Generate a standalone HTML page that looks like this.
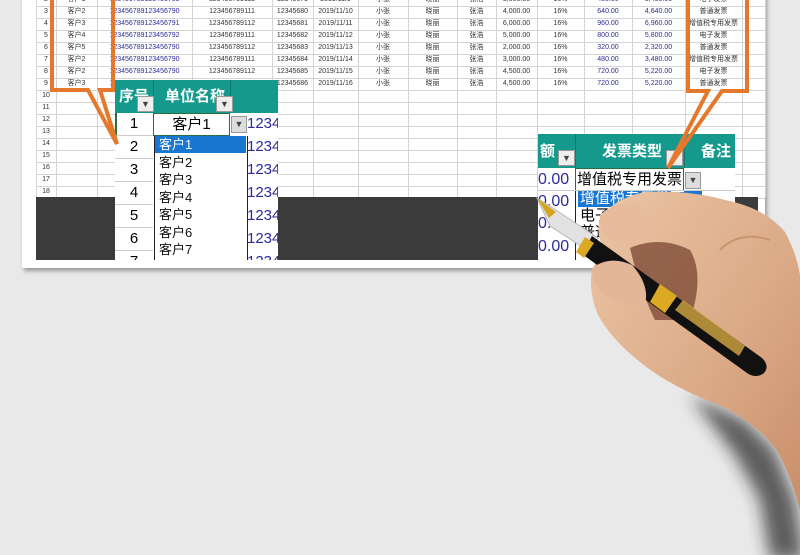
<!DOCTYPE html>
<html><head><meta charset="utf-8"><style>
body{margin:0;width:800px;height:555px;overflow:hidden;background:#e9e9e9;font-family:"Liberation Sans","Noto Sans CJK SC",sans-serif;position:relative}
.a{position:absolute}
.sheet{left:22px;top:-10px;width:743px;height:278px;background:#fff;box-shadow:2px 3px 4px rgba(0,0,0,.35)}
.t{position:absolute;font-size:7px;color:#333;white-space:nowrap;line-height:12px;text-align:center}
.b{color:#2b2b9a}
.hl{position:absolute;height:1px;background:#d4d4d4}
.vl{position:absolute;width:1px;background:#d4d4d4}
.clip{position:absolute;overflow:hidden}
</style></head><body>
<div class="a sheet"></div>
<div id="g"></div>
<div class="a" style="left:36px;top:197px;width:722px;height:63px;background:#3b3b3b"></div>

<!-- left zoomed table -->
<div class="clip" style="left:115px;top:80px;width:163px;height:180px;background:#fff">
<div class="a" style="left:0;top:0;width:163px;height:33px;background:#14998c"></div>
<div class="a" style="left:38px;top:0;width:1px;height:33px;background:#0e7a70"></div>
<div class="a" style="left:115px;top:0;width:1px;height:33px;background:#0e7a70"></div>
<div class="a" style="left:4px;top:5px;color:#fff;font-size:15px;font-weight:bold">序号</div>
<div class="a" style="left:50px;top:5px;color:#fff;font-size:15px;font-weight:bold">单位名称</div>
<div class="a" style="left:22px;top:16px;width:15px;height:14px;background:#eee;border:1px solid #999;font-size:9px;text-align:center;line-height:14px;color:#444">▼</div>
<div class="a" style="left:101px;top:16px;width:15px;height:14px;background:#eee;border:1px solid #999;font-size:9px;text-align:center;line-height:14px;color:#444">▼</div>
<div class="a" style="left:0;top:33px;width:38px;height:22px;border-left:2px solid #2c6e3c"></div>
<div class="a" style="left:38px;top:33px;width:75px;height:21px;border:1px solid #2c6e3c;font-size:15px;text-align:center;line-height:21px">客户1</div>
<div class="a" style="left:116px;top:36px;width:14px;height:15px;background:#ddd;border:1px solid #999;font-size:9px;text-align:center;line-height:15px;color:#444">▼</div>
<div id="lt"></div>
<div class="a" style="left:39px;top:56px;width:92px;height:130px;background:#fff;border-left:1px solid #222;border-right:1px solid #222"></div>
<div class="a" style="left:40px;top:56px;width:91px;height:17px;background:#1877d2"></div>
<div id="dl"></div>
</div>

<!-- right zoomed table -->
<div class="a" style="left:538px;top:134px;width:197px;height:126px;background:#fff"></div>
<div class="a" style="left:538px;top:134px;width:197px;height:34px;background:#14998c"></div>
<div class="a" style="left:575px;top:134px;width:1px;height:34px;background:#0e7a70"></div>
<div class="a" style="left:684px;top:134px;width:1px;height:34px;background:#0e7a70"></div>
<div class="a" style="left:540px;top:140px;color:#fff;font-size:15px;font-weight:bold">额</div>
<div class="a" style="left:602px;top:140px;color:#fff;font-size:15px;font-weight:bold">发票类型</div>
<div class="a" style="left:701px;top:140px;color:#fff;font-size:15px;font-weight:bold">备注</div>
<div class="a" style="left:558px;top:150px;width:15px;height:14px;background:#eee;border:1px solid #999;font-size:9px;text-align:center;line-height:14px;color:#444">▼</div>
<div class="a" style="left:666px;top:150px;width:15px;height:14px;background:#eee;border:1px solid #999;font-size:9px;text-align:center;line-height:14px;color:#444">▼</div>
<div class="a" style="left:575px;top:168px;width:107px;height:21px;border:1px solid #2c6e3c;font-size:15px;text-align:center;line-height:21px">增值税专用发票</div>
<div class="a" style="left:685px;top:172px;width:14px;height:15px;background:#ddd;border:1px solid #999;font-size:9px;text-align:center;line-height:15px;color:#444">▼</div>
<div class="clip" style="left:575px;top:190px;width:126px;height:70px;background:#fff;border-left:1px solid #222">
<div class="a" style="left:2px;top:1px;width:123px;height:16px;background:#1877d2;color:#fff;font-size:15px;line-height:16px;padding-left:2px;white-space:nowrap">增值税专用发票</div>
<div class="a" style="left:4px;top:17px;font-size:15px;line-height:17px">电子发票</div>
<div class="a" style="left:4px;top:34px;font-size:15px;line-height:17px">普通发票</div>
</div>
<div class="a b" style="left:538px;top:169px;font-size:16px;line-height:22px">0.00</div>
<div class="a b" style="left:538px;top:191px;font-size:16px;line-height:22px">0.00</div>
<div class="a b" style="left:538px;top:213px;font-size:16px;line-height:22px">0.00</div>
<div class="a b" style="left:538px;top:236px;font-size:16px;line-height:22px">0.00</div>
<div class="a" style="left:538px;top:190px;width:197px;height:1px;background:#ccc"></div>

<svg class="a" style="left:0;top:0" width="800" height="555">
<defs>
<linearGradient id="sk" x1="0" y1="0" x2="1" y2="1"><stop offset="0" stop-color="#ebc6a6"/><stop offset=".55" stop-color="#dcab88"/><stop offset="1" stop-color="#c98e6a"/></linearGradient>
<filter id="bl"><feGaussianBlur stdDeviation="8"/></filter>
</defs>
<path d="M52,-5 L52,90 L88,90 L117,144 L100,90 L113,90 L113,-5" fill="none" stroke="#e5782b" stroke-width="4"/>
<path d="M688,-5 L688,91 L708,91 L668,168 L722,91 L747,91 L747,-5" fill="none" stroke="#e5782b" stroke-width="4"/>
<path d="M690,395 L745,420 L775,450 L795,500 L805,560 L770,560 L760,500 L735,455 Z" fill="#222" opacity=".7" filter="url(#bl)"/>
<path d="M600,218 Q615,198 645,192 Q690,190 725,200 Q765,208 785,232 Q797,255 800,275 L800,510 Q792,478 778,452 Q755,420 712,402 Q668,385 640,362 Q612,340 598,315 Q588,290 592,270 Q598,256 605,250 Q595,235 600,218 Z" fill="url(#sk)"/>
<path d="M630,248 Q660,235 690,250 Q705,275 690,320 L655,320 Q640,290 630,248 Z" fill="#7a4430" opacity=".75"/>
<path d="M720,250 Q740,230 770,240" fill="none" stroke="#c9946f" stroke-width="2"/>
<path d="M537,198 L556,210 L598,238 L590,252 L550,226 Z" fill="#e2e2e2" stroke="#b8b8b8"/>
<path d="M537,198 L556,212 L549,218 Z" fill="#d4a520"/>
<path d="M592,236 L762,358 Q770,366 764,373 Q756,379 747,373 L582,254 Z" fill="#111"/>
<path d="M660,284 L677,296 L665,313 L650,302 Z" fill="#dbaa22"/>
<path d="M683,300 L745,346 L739,356 L675,310 Z" fill="#c9a040" opacity=".85"/>
<path d="M585,237 L594,243 L584,258 L576,252 Z" fill="#dbaa22"/>
<path d="M600,215 Q615,200 640,205 Q655,215 650,235 Q635,245 610,240 Q598,232 600,215 Z" fill="#e6bc9c"/>
<path d="M592,268 Q610,255 632,265 Q650,285 645,305 Q625,308 605,295 Q592,285 592,268 Z" fill="#e2b696"/>
</svg>
<script>
var g=document.getElementById('g'),h='';
var cols=[36,56,97,192,272,313,358,408,457,496,537,584,632,685,742,765];
for(var i=0;i<cols.length;i++)h+='<div class="vl" style="left:'+cols[i]+'px;top:0;height:197px"></div>';
for(var r=0;r<17;r++)h+='<div class="hl" style="left:36px;width:729px;top:'+(6+r*12)+'px"></div>';
var cust=['客户1','客户2','客户3','客户4','客户5','客户2','客户2','客户3'];
var acc=['123456789123456789','123456789123456790','123456789123456791','123456789123456792','123456789123456790','123456789123456790','123456789123456790','123456789123456790'];
var amt=['3,000.00','4,000.00','6,000.00','5,000.00','2,000.00','3,000.00','4,500.00','4,500.00'];
var tax=['480.00','640.00','960.00','800.00','320.00','480.00','720.00','720.00'];
var tot=['3,480.00','4,640.00','6,960.00','5,800.00','2,320.00','3,480.00','5,220.00','5,220.00'];
var inv=['电子发票','普通发票','增值税专用发票','电子发票','普通发票','增值税专用发票','电子发票','普通发票'];
function c(x,w,y,t,cl){h+='<div class="t '+(cl||'')+'" style="left:'+x+'px;width:'+w+'px;top:'+y+'px">'+t+'</div>'}
for(var r=0;r<17;r++){var y=-6+r*12;c(36,20,y,r+2);
 if(r<8){var i=r;c(56,41,y,cust[i]);c(97,95,y,acc[i],'b');c(192,80,y,i%2?'123456789111':'123456789112');c(272,41,y,12345679+i);c(313,45,y,'2019/11/'+(9+i));c(358,50,y,'小张');c(408,49,y,'晓丽');c(457,39,y,'张浩');c(496,41,y,amt[i]);c(537,47,y,'16%');c(584,48,y,tax[i],'b');c(632,53,y,tot[i],'b');c(685,57,y,inv[i]);}}
g.innerHTML=h;
var lt='';
for(var k=1;k<=7;k++){var y=33+(k-1)*23;lt+='<div class="a" style="left:0;top:'+y+'px;width:38px;height:22px;border-bottom:1px solid #ccc;font-size:15px;text-align:center;line-height:22px">'+k+'</div>';
 lt+='<div class="a b" style="left:132px;top:'+y+'px;font-size:15px;line-height:22px">1234</div>';}
document.getElementById('lt').innerHTML=lt;
var dl='';
for(var k=1;k<=7;k++)dl+='<div class="a" style="left:44px;top:'+(56+(k-1)*17.5)+'px;font-size:13px;line-height:17px;color:'+(k==1?'#fff':'#111')+'">客户'+k+'</div>';
document.getElementById('dl').innerHTML=dl;
</script>
</body></html>
